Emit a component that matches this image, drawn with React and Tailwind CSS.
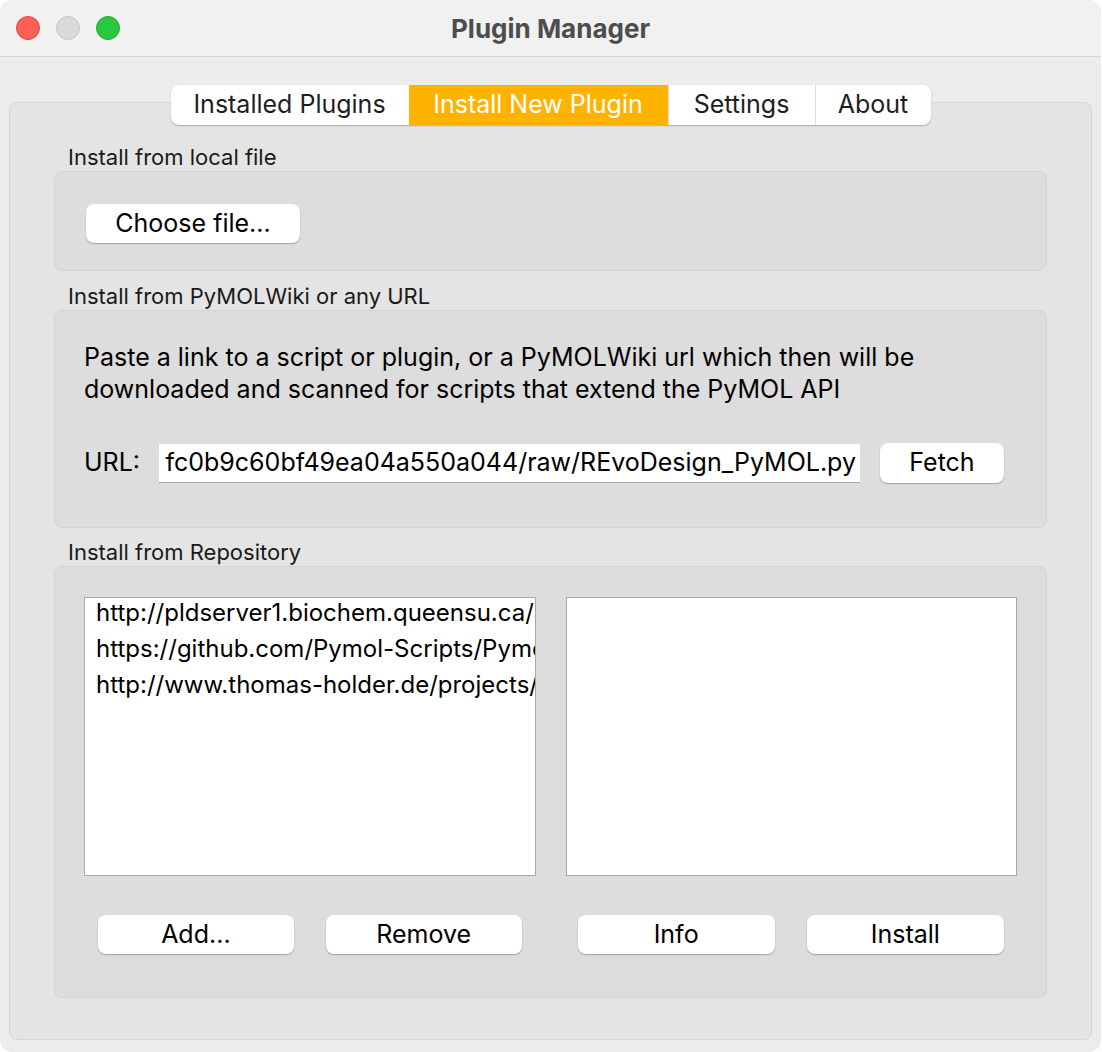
import { useState } from 'react'

const font = { fontFamily: 'Inter, "Liberation Sans", sans-serif' }

const tabs = [
  { name: 'Installed Plugins', w: 'w-[238px]' },
  { name: 'Install New Plugin', w: 'w-[259px]' },
  { name: 'Settings', w: 'w-[147px]' },
  { name: 'About', w: 'w-[116px]' },
]

// list is narrower than the urls, the ends are cut like in the real widget
const repos = [
  'http://pldserver1.biochem.queensu.ca/~',
  'https://github.com/Pymol-Scripts/Pymol',
  'http://www.thomas-holder.de/projects/p',
]

function Button({ children, className = '' }) {
  return (
    <button className={`h-[39px] bg-white rounded-[8px] shadow-[0_1px_1.5px_rgba(0,0,0,0.28)] text-[25px] text-black ${className}`}>
      {children}
    </button>
  )
}

function Group({ label, children, className = '' }) {
  return (
    <div>
      <div className="h-[24px] leading-[24px] text-[22px] text-[#1a1a1a] pl-[14px] mb-[2px]">{label}</div>
      <div className={`bg-[#dddddd] border border-[#d4d4d4] rounded-[8px] ${className}`}>{children}</div>
    </div>
  )
}

export default function App() {
  const [tab, setTab] = useState(1)

  return (
    <div className="w-[1102px] h-[1052px] bg-white" style={font}>
      <div className="w-[1101px] h-[1052px] bg-[#ececec] rounded-[12px] overflow-hidden flex flex-col">
        {/* title bar */}
        <div className="h-[57px] shrink-0 bg-[#f1f1f1] border-b border-[#d3d3d3] flex items-center relative">
          <div className="flex gap-[16px] pl-[16px]">
            <span className="w-[24px] h-[24px] rounded-full bg-[#fe5f57] border border-[#e2463f]" />
            <span className="w-[24px] h-[24px] rounded-full bg-[#dadada] border border-[#c6c6c6]" />
            <span className="w-[24px] h-[24px] rounded-full bg-[#28c840] border border-[#1fae33]" />
          </div>
          <div className="absolute inset-x-0 text-center text-[26px] font-bold text-[#4d4d4d] pointer-events-none">
            Plugin Manager
          </div>
        </div>

        <div className="px-[9px] pt-[28px]">
          {/* tabs */}
          <div className="relative z-10 flex justify-center">
            <div className="flex h-[40px] bg-white rounded-[8px] shadow-[0_1px_1.5px_rgba(0,0,0,0.25)] overflow-hidden">
              {tabs.map((t, i) => (
                <button
                  key={t.name}
                  onClick={() => setTab(i)}
                  className={`${t.w} h-full text-[25px] ${i === tab ? 'bg-[#fdb300] text-white' : 'text-[#1e1e1e]'} ${i > 1 ? 'border-l border-[#dcdcdc]' : ''}`}
                >
                  {t.name}
                </button>
              ))}
            </div>
          </div>

          {/* pane */}
          <div className="-mt-[23px] h-[938px] bg-[#e4e4e4] border border-[#d6d6d6] rounded-[8px] pt-[42px] px-[44px]">
            <Group label="Install from local file" className="h-[100px] pt-[32px] pl-[31px]">
              <Button className="w-[214px]">Choose file...</Button>
            </Group>

            <div className="mt-[13px]">
              <Group label="Install from PyMOLWiki or any URL" className="h-[218px] pt-[30px] pl-[29px] pr-[42px]">
                <p className="text-[25px] leading-[32px] text-black">
                  Paste a link to a script or plugin, or a PyMOLWiki url which then will be downloaded and scanned for scripts that extend the PyMOL API
                </p>
                <div className="mt-[38px] flex items-center">
                  <span className="text-[25px] text-black w-[75px]">URL:</span>
                  <div className="w-[701px] h-[39px] bg-white border-b border-[#a9a9a9] flex justify-end items-center overflow-hidden whitespace-nowrap text-[25px] text-black">
                    <span className="pr-[4px]">fc0b9c60bf49ea04a550a044/raw/REvoDesign_PyMOL.py</span>
                  </div>
                  <Button className="w-[124px] ml-[20px] h-[40px]">Fetch</Button>
                </div>
              </Group>
            </div>

            <div className="mt-[12px]">
              <Group label="Install from Repository" className="h-[432px] pt-[30px] px-[29px]">
                <div className="grid grid-cols-2 gap-[30px]">
                  <div className="h-[279px] bg-white border border-[#a8a8a8] pl-[11px] overflow-hidden">
                    {repos.map(r => (
                      <div key={r} className="leading-[30px] mb-[6px] text-[24px] text-black whitespace-nowrap">{r}</div>
                    ))}
                  </div>
                  <div className="h-[279px] bg-white border border-[#a8a8a8]" />
                </div>
                <div className="grid grid-cols-2 gap-[30px] mt-[39px]">
                  <div className="grid grid-cols-2 gap-[32px] px-[14px]">
                    <Button>Add...</Button>
                    <Button>Remove</Button>
                  </div>
                  <div className="grid grid-cols-2 gap-[32px] pl-[12px] pr-[13px]">
                    <Button>Info</Button>
                    <Button>Install</Button>
                  </div>
                </div>
              </Group>
            </div>
          </div>
        </div>
      </div>
    </div>
  )
}
